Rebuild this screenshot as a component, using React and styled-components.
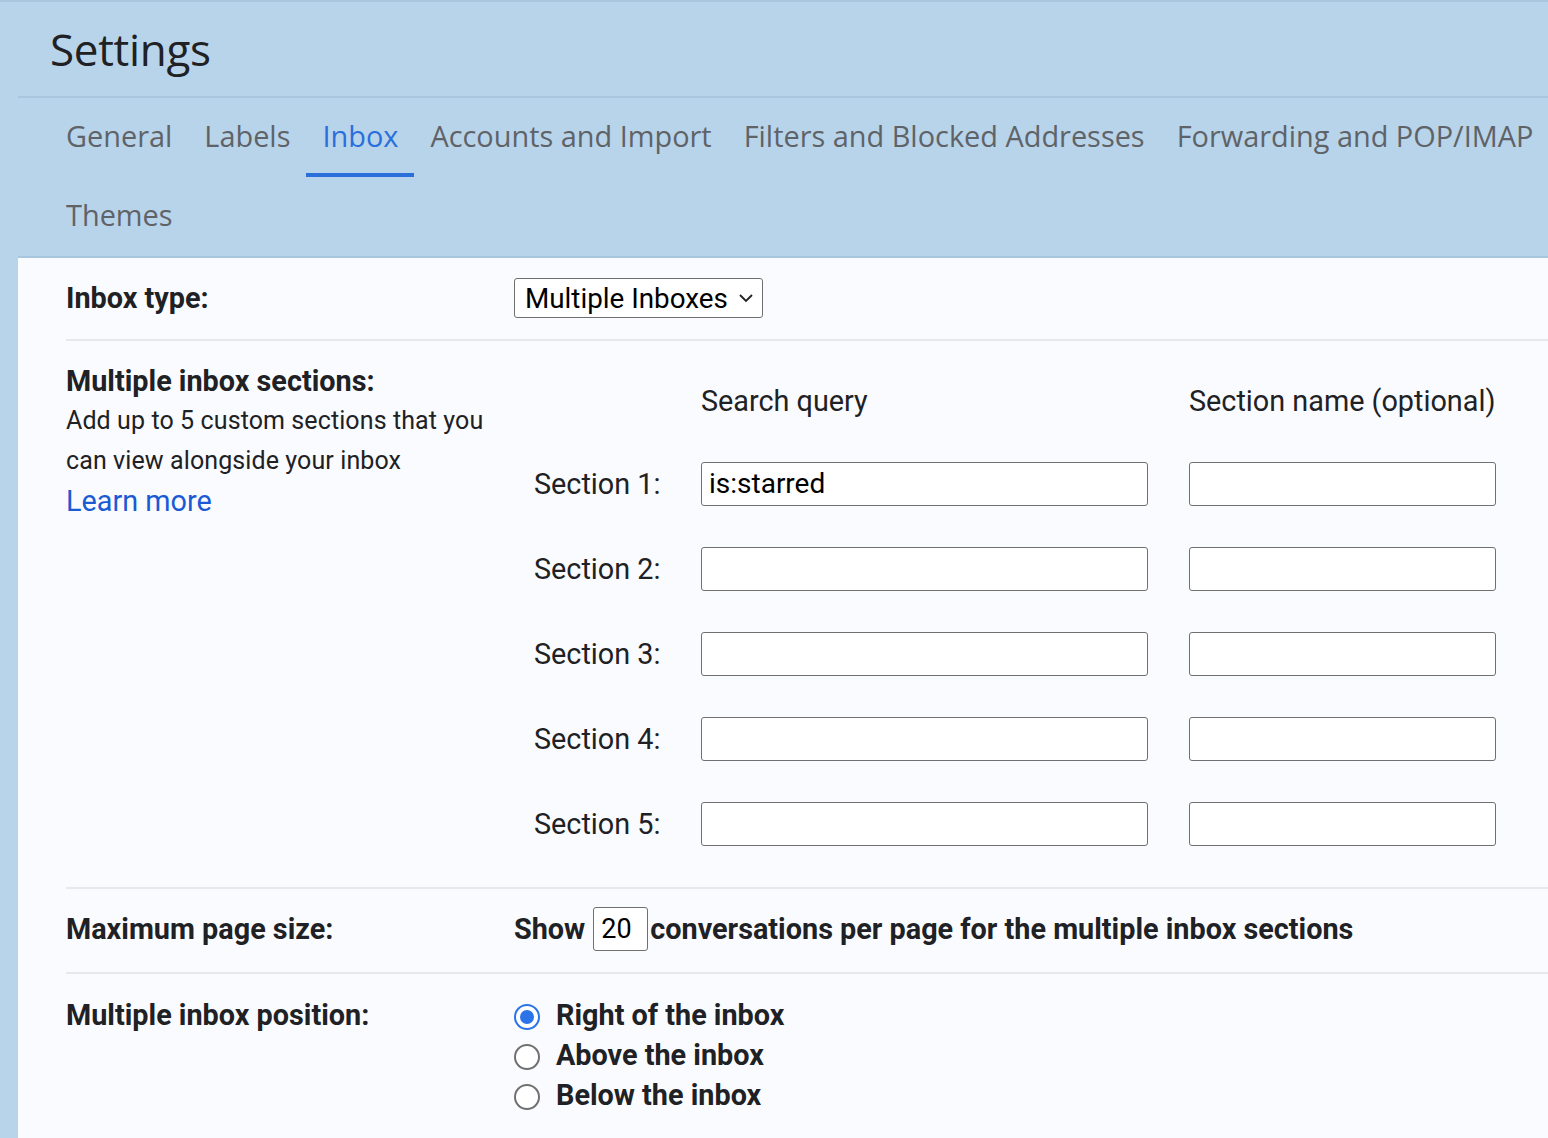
import React from "react";
import styled, { createGlobalStyle } from "styled-components";

const Global = createGlobalStyle`
  html, body { margin: 0; padding: 0; }
  body { font-family: Roboto, "Noto Sans", sans-serif; background: #b8d4ea; }
  * { box-sizing: border-box; }
`;

const Page = styled.div`
  min-height: 1138px;
  background: #b8d4ea;
  border-top: 2px solid #a9c6df;
  overflow: hidden;
`;

const Header = styled.header`
  height: 94px;
  padding-left: 50px;
  display: flex;
  align-items: center;
`;

const Title = styled.h1`
  margin: 0;
  font-family: "Open Sans", Roboto, sans-serif;
  font-weight: 400;
  font-size: 44px;
  letter-spacing: -0.3px;
  color: #202124;
`;

const HeaderRule = styled.div`
  margin-left: 18px;
  border-top: 2px solid #a9c6df;
`;

const Tabs = styled.nav`
  display: flex;
  flex-wrap: wrap;
  padding-left: 50px;
  margin-right: -40px;
`;

const Tab = styled.div`
  height: 79px;
  padding: 0 16px 5px;
  display: flex;
  align-items: center;
  font-family: "Open Sans", Roboto, sans-serif;
  font-size: 28.9px;
  color: ${(p) => (p.$active ? "#2b6fdc" : "#5f6368")};
  box-shadow: ${(p) => (p.$active ? "inset 0 -4px 0 #2b6fdc" : "none")};
  white-space: nowrap;
`;

const Panel = styled.main`
  margin-left: 18px;
  background: #fafbfe;
  border-top: 2px solid #a9c6df;
  padding-left: 48px;
`;

const Row = styled.section`
  display: grid;
  grid-template-columns: 448px 1fr;
  align-items: start;
  border-bottom: 2px solid #e6e8eb;
  padding: ${(p) => p.$pad || "0"};
`;

const Label = styled.div`
  font-size: 28.8px;
  font-weight: 700;
  color: #202124;
  line-height: 40px;
  white-space: nowrap;
`;

const Desc = styled.div`
  font-size: 25px;
  color: #202124;
  line-height: 40px;
  letter-spacing: 0.1px;
`;

const Link = styled.a`
  display: block;
  font-size: 28.8px;
  line-height: 40px;
  color: #1a5ad3;
  text-decoration: none;
`;

const Select = styled.div`
  display: inline-flex;
  align-items: center;
  gap: 10px;
  height: 40px;
  padding: 0 8px 0 10px;
  border: 1px solid #6f6f6f;
  border-radius: 3px;
  background: #fff;
  font-size: 27.8px;
  color: #000;
`;

const Table = styled.div`
  display: grid;
  grid-template-columns: 167px 447px 348px;
  grid-auto-rows: 85px;
  grid-template-rows: 80px;
  align-content: start;
  padding-left: 20px;
  align-items: center;
`;

const ColHead = styled.div`
  font-size: 28.8px;
  color: #202124;
  white-space: nowrap;
  padding-left: ${(p) => p.$pl || "0"};
`;

const SecLabel = styled.div`
  font-size: 28.8px;
  color: #202124;
  white-space: nowrap;
`;

const Cell = styled.div`
  display: flex;
  align-items: center;
  padding-left: ${(p) => p.$pl || "0"};
`;

const TextBox = styled.div`
  width: ${(p) => p.$w};
  height: 44px;
  border: 1px solid #707070;
  border-radius: 3px;
  background: #fff;
  padding: 0 7px;
  display: flex;
  align-items: center;
  font-size: 28px;
  color: #000;
`;

const Inline = styled.div`
  display: flex;
  align-items: center;
  font-size: 28.8px;
  font-weight: 700;
  color: #202124;
  white-space: nowrap;
  margin-top: -2px;
`;

const NumBox = styled.div`
  width: 55px;
  height: 44px;
  margin: 0 2px 0 8px;
  border: 1px solid #707070;
  border-radius: 3px;
  background: #fff;
  padding-left: 7px;
  display: flex;
  align-items: center;
  font-size: 27px;
  font-weight: 400;
  color: #000;
`;

const RadioList = styled.div`
  display: flex;
  flex-direction: column;
`;

const RadioRow = styled.div`
  display: flex;
  align-items: center;
  height: 40px;
  gap: 16px;
  font-size: 28.8px;
  font-weight: 700;
  color: #202124;
`;

const Radio = styled.span`
  width: 26px;
  height: 26px;
  border-radius: 50%;
  border: 2px solid ${(p) => (p.$on ? "#2a73e8" : "#707070")};
  display: inline-flex;
  align-items: center;
  justify-content: center;
  background: #fff;
  margin-top: 3px;
  &::after {
    content: "";
    width: 14px;
    height: 14px;
    border-radius: 50%;
    background: ${(p) => (p.$on ? "#2a73e8" : "transparent")};
  }
`;

const Chevron = () => (
  <svg width="16" height="10" viewBox="0 0 16 10" fill="none">
    <path d="M2 2l6 6 6-6" stroke="#202124" strokeWidth="1.8" />
  </svg>
);

const tabs = [
  "General",
  "Labels",
  "Inbox",
  "Accounts and Import",
  "Filters and Blocked Addresses",
  "Forwarding and POP/IMAP",
  "Themes",
];

export default function App() {
  return (
    <Page>
      <Global />
      <Header>
        <Title>Settings</Title>
      </Header>
      <HeaderRule />
      <Tabs>
        {tabs.map((t) => (
          <Tab key={t} $active={t === "Inbox"}>
            {t}
          </Tab>
        ))}
      </Tabs>
      <Panel>
        <Row $pad="20px 0 21px">
          <Label>Inbox type:</Label>
          <div>
            <Select>
              Multiple Inboxes
              <Chevron />
            </Select>
          </div>
        </Row>
        <Row $pad="20px 0 21px">
          <div>
            <Label>Multiple inbox sections:</Label>
            <Desc>Add up to 5 custom sections that you</Desc>
            <Desc>can view alongside your inbox</Desc>
            <Link href="#">Learn more</Link>
          </div>
          <Table>
            <div />
            <ColHead>Search query</ColHead>
            <ColHead $pl="41px">Section name (optional)</ColHead>
            {[1, 2, 3, 4, 5].map((n) => (
              <React.Fragment key={n}>
                <SecLabel>Section {n}:</SecLabel>
                <Cell>
                  <TextBox $w="447px">{n === 1 ? "is:starred" : ""}</TextBox>
                </Cell>
                <Cell $pl="41px">
                  <TextBox $w="307px" />
                </Cell>
              </React.Fragment>
            ))}
          </Table>
        </Row>
        <Row $pad="20px 0 21px">
          <Label>Maximum page size:</Label>
          <Inline>
            Show
            <NumBox>20</NumBox>
            conversations per page for the multiple inbox sections
          </Inline>
        </Row>
        <Row $pad="21px 0 40px">
          <Label>Multiple inbox position:</Label>
          <RadioList>
            <RadioRow>
              <Radio $on />
              Right of the inbox
            </RadioRow>
            <RadioRow>
              <Radio />
              Above the inbox
            </RadioRow>
            <RadioRow>
              <Radio />
              Below the inbox
            </RadioRow>
          </RadioList>
        </Row>
      </Panel>
    </Page>
  );
}
